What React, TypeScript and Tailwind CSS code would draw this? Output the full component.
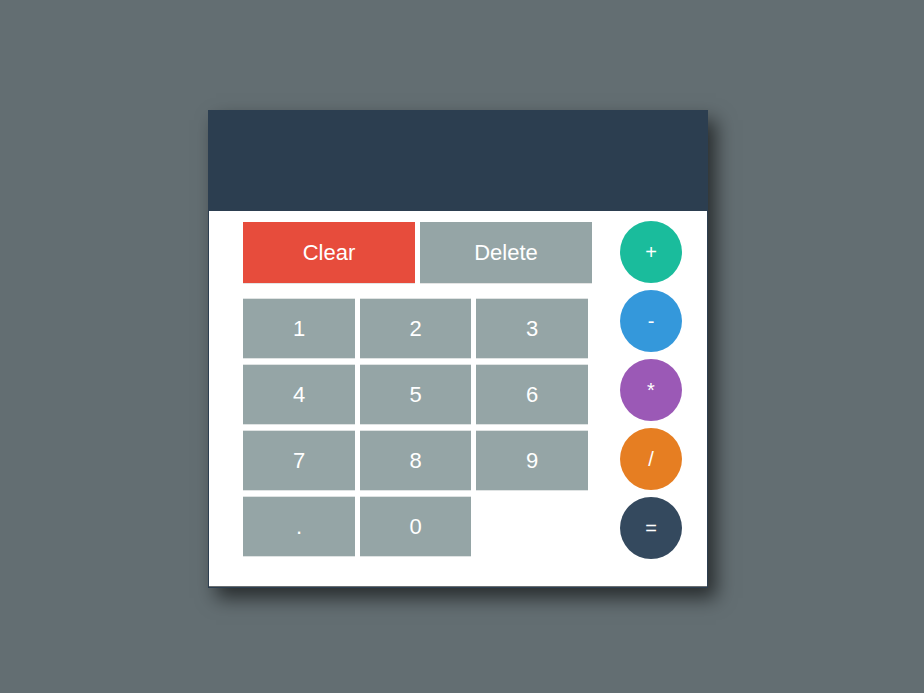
const numbers = ["1", "2", "3", "4", "5", "6", "7", "8", "9", ".", "0"];

const ops = [
  { label: "+", color: "bg-[#1abc9c]" },
  { label: "-", color: "bg-[#3498db]" },
  { label: "*", color: "bg-[#9b59b6]" },
  { label: "/", color: "bg-[#e67e22]" },
  { label: "=", color: "bg-[#34495e]" },
];

export default function App() {
  return (
    <div className="min-h-screen bg-[#636e72] pt-[110px] pl-[208px] font-['Liberation_Sans',Arial,sans-serif]">
      <div className="w-[500px] border border-[#2c3e50] bg-white shadow-[8px_10px_18px_rgba(0,0,0,0.6)]">
        <div className="h-[100px] bg-[#2c3e50]"></div>
        <div className="flex border-b border-[#6b6f70] pb-[27px] pl-[34px] pt-[10px]">
          <div className="w-[349px] pt-[1px]">
            <div className="flex gap-[5px]">
              <button className="h-[62px] w-[172px] border-b border-[#e4e4e4] bg-[#e74c3c] font-['Liberation_Sans',Arial,sans-serif] text-[22px] text-white">
                Clear
              </button>
              <button className="h-[62px] w-[172px] border-b border-[#e4e4e4] bg-[#95a5a6] font-['Liberation_Sans',Arial,sans-serif] text-[22px] text-white">
                Delete
              </button>
            </div>
            <div className="mt-[14px] grid w-[345px] grid-cols-[112px_111px_112px] gap-[5px]">
              {numbers.map((n) => (
                <button
                  key={n}
                  className="h-[61px] border-y border-[#dfe3e3] bg-[#95a5a6] font-['Liberation_Sans',Arial,sans-serif] text-[22px] text-white"
                >
                  {n}
                </button>
              ))}
            </div>
          </div>
          <div className="ml-[28px] flex flex-col gap-[7px]">
            {ops.map((o) => (
              <button
                key={o.label}
                className={`flex h-[62px] w-[62px] items-center justify-center rounded-full font-['Liberation_Sans',Arial,sans-serif] text-[20px] text-white ${o.color}`}
              >
                {o.label}
              </button>
            ))}
          </div>
        </div>
      </div>
    </div>
  );
}
